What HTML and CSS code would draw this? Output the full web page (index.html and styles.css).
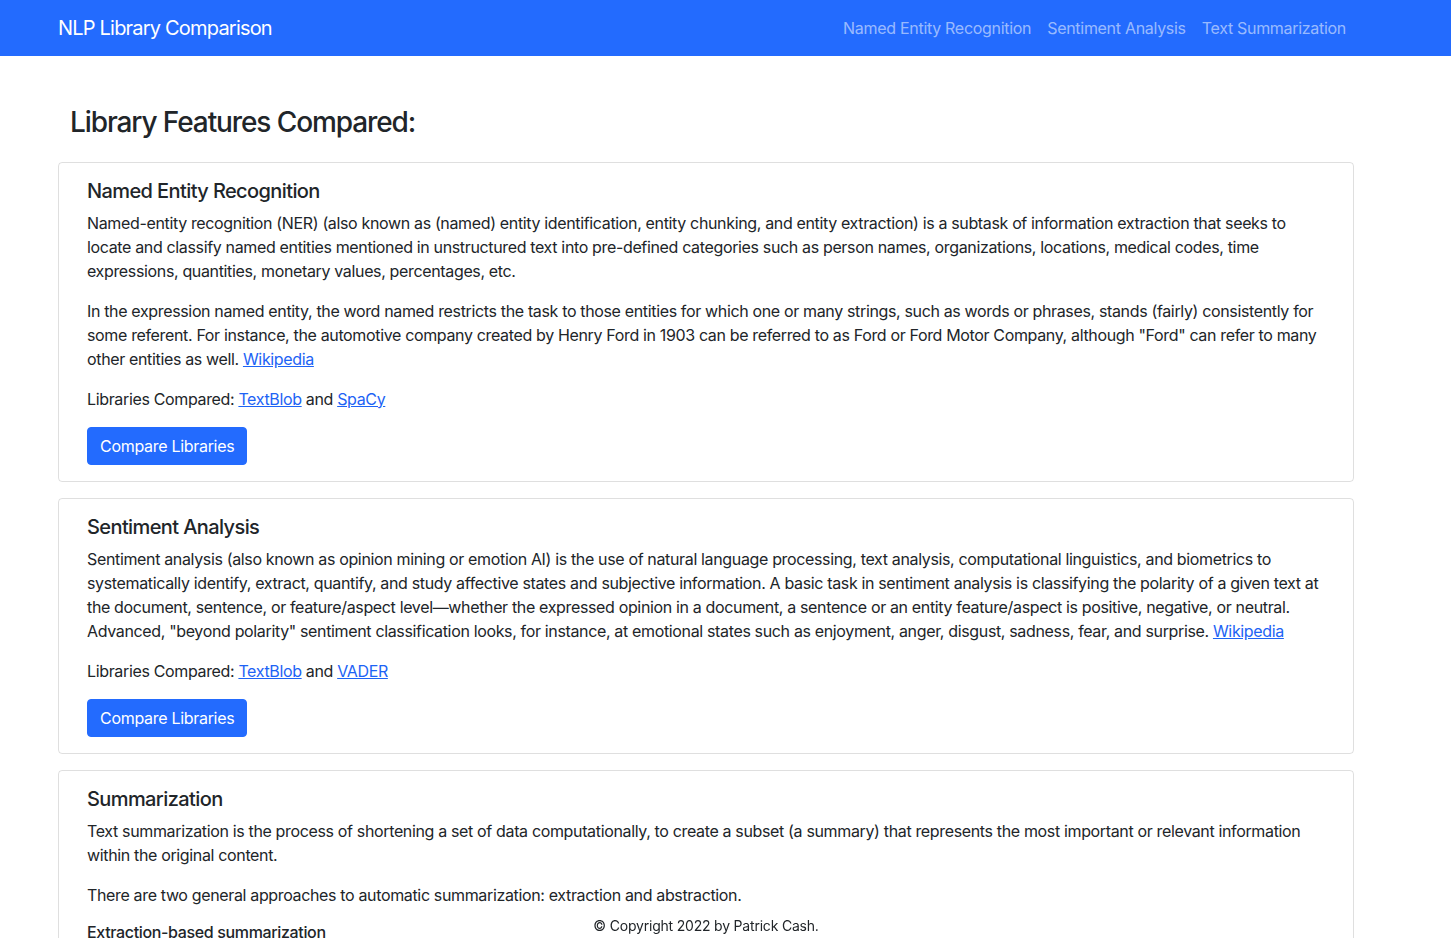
FILE: index.html
```html
<!DOCTYPE html>
<html lang="en">
<head>
<meta charset="utf-8">
<title>NLP Library Comparison</title>
<link rel="stylesheet" href="styles.css">
</head>
<body>
<nav class="navbar">
  <div class="container nav-inner">
    <a class="brand" href="#">NLP Library Comparison</a>
    <ul class="nav-links">
      <li><a href="#">Named Entity Recognition</a></li>
      <li><a href="#">Sentiment Analysis</a></li>
      <li><a href="#">Text Summarization</a></li>
    </ul>
  </div>
</nav>
<main class="container main">
  <h3 class="page-title">Library Features Compared:</h3>
  <div class="card">
    <h5 class="card-title">Named Entity Recognition</h5>
    <p>Named-entity recognition (NER) (also known as (named) entity identification, entity chunking, and entity extraction) is a subtask of information extraction that seeks to locate and classify named entities mentioned in unstructured text into pre-defined categories such as person names, organizations, locations, medical codes, time expressions, quantities, monetary values, percentages, etc.</p>
    <p>In the expression named entity, the word named restricts the task to those entities for which one or many strings, such as words or phrases, stands (fairly) consistently for some referent. For instance, the automotive company created by Henry Ford in 1903 can be referred to as Ford or Ford Motor Company, although "Ford" can refer to many other entities as well. <a href="#">Wikipedia</a></p>
    <p>Libraries Compared: <a href="#">TextBlob</a> and <a href="#">SpaCy</a></p>
    <a class="btn" href="#">Compare Libraries</a>
  </div>
  <div class="card">
    <h5 class="card-title">Sentiment Analysis</h5>
    <p>Sentiment analysis (also known as opinion mining or emotion AI) is the use of natural language processing, text analysis, computational linguistics, and biometrics to systematically identify, extract, quantify, and study affective states and subjective information. A basic task in sentiment analysis is classifying the polarity of a given text at the document, sentence, or feature/aspect level—whether the expressed opinion in a document, a sentence or an entity feature/aspect is positive, negative, or neutral. Advanced, "beyond polarity" sentiment classification looks, for instance, at emotional states such as enjoyment, anger, disgust, sadness, fear, and surprise. <a href="#">Wikipedia</a></p>
    <p>Libraries Compared: <a href="#">TextBlob</a> and <a href="#">VADER</a></p>
    <a class="btn" href="#">Compare Libraries</a>
  </div>
  <div class="card">
    <h5 class="card-title">Summarization</h5>
    <p>Text summarization is the process of shortening a set of data computationally, to create a subset (a summary) that represents the most important or relevant information within the original content.</p>
    <p>There are two general approaches to automatic summarization: extraction and abstraction.</p>
    <h6 class="sub-title">Extraction-based summarization</h6>
    <p>Here, content is extracted from the original data, but the extracted content is not modified in any way.</p>
    <a class="btn" href="#">Compare Libraries</a>
  </div>
</main>
<footer class="footer">
  <div class="container footer-inner">© Copyright 2022 by Patrick Cash.</div>
</footer>
</body>
</html>
```
FILE: styles.css
```css
* { box-sizing: border-box; }
html, body { margin: 0; padding: 0; }
body {
  font-family: "Inter", "Noto Sans", sans-serif;
  font-size: 16px;
  line-height: 1.5;
  letter-spacing: -0.35px;
  color: #212529;
  background: #fff;
}
a { color: #1d63f5; }
.container {
  width: 1320px;
  margin-left: 46px;
  padding: 0 12px;
}
.navbar {
  background: #236bfe;
  height: 56px;
  padding: 8px 0;
}
.nav-inner {
  display: flex;
  align-items: center;
  justify-content: space-between;
  height: 40px;
}
.brand {
  color: #fff;
  text-decoration: none;
  font-size: 20px;
  line-height: 30px;
  letter-spacing: -0.8px;
  padding: 5px 0;
}
.nav-links {
  list-style: none;
  margin: 0;
  padding: 0;
  display: flex;
}
.nav-links a {
  display: block;
  padding: 8px;
  color: rgba(255,255,255,0.55);
  text-decoration: none;
  letter-spacing: -0.3px;
}
.main { padding-top: 50px; padding-bottom: 40px; }
.page-title {
  font-size: 28px;
  font-weight: 500;
  line-height: 1.2;
  letter-spacing: -1.1px;
  margin: 0 0 22px;
  padding-left: 12px;
}
.card {
  border: 1px solid rgba(0,0,0,0.125);
  border-radius: 4px;
  padding: 16px 28px;
  margin-bottom: 16px;
}
.card-title {
  font-size: 20px;
  font-weight: 500;
  line-height: 1.2;
  letter-spacing: -0.6px;
  margin: 0 0 8px;
}
.sub-title {
  font-size: 16px;
  font-weight: 500;
  line-height: 1.2;
  margin: 0 0 8px;
}
p { margin: 0 0 16px; }
.btn {
  display: inline-block;
  background: #236bfe;
  color: #fff;
  text-decoration: none;
  padding: 6px 12px;
  border: 1px solid #236bfe;
  border-radius: 4px;
  line-height: 24px;
  letter-spacing: -0.3px;
}
.footer {
  position: fixed;
  left: 0;
  right: 0;
  bottom: 2px;
}
.footer-inner {
  text-align: center;
  font-size: 14px;
  letter-spacing: -0.2px;
  line-height: 21px;
}
```
